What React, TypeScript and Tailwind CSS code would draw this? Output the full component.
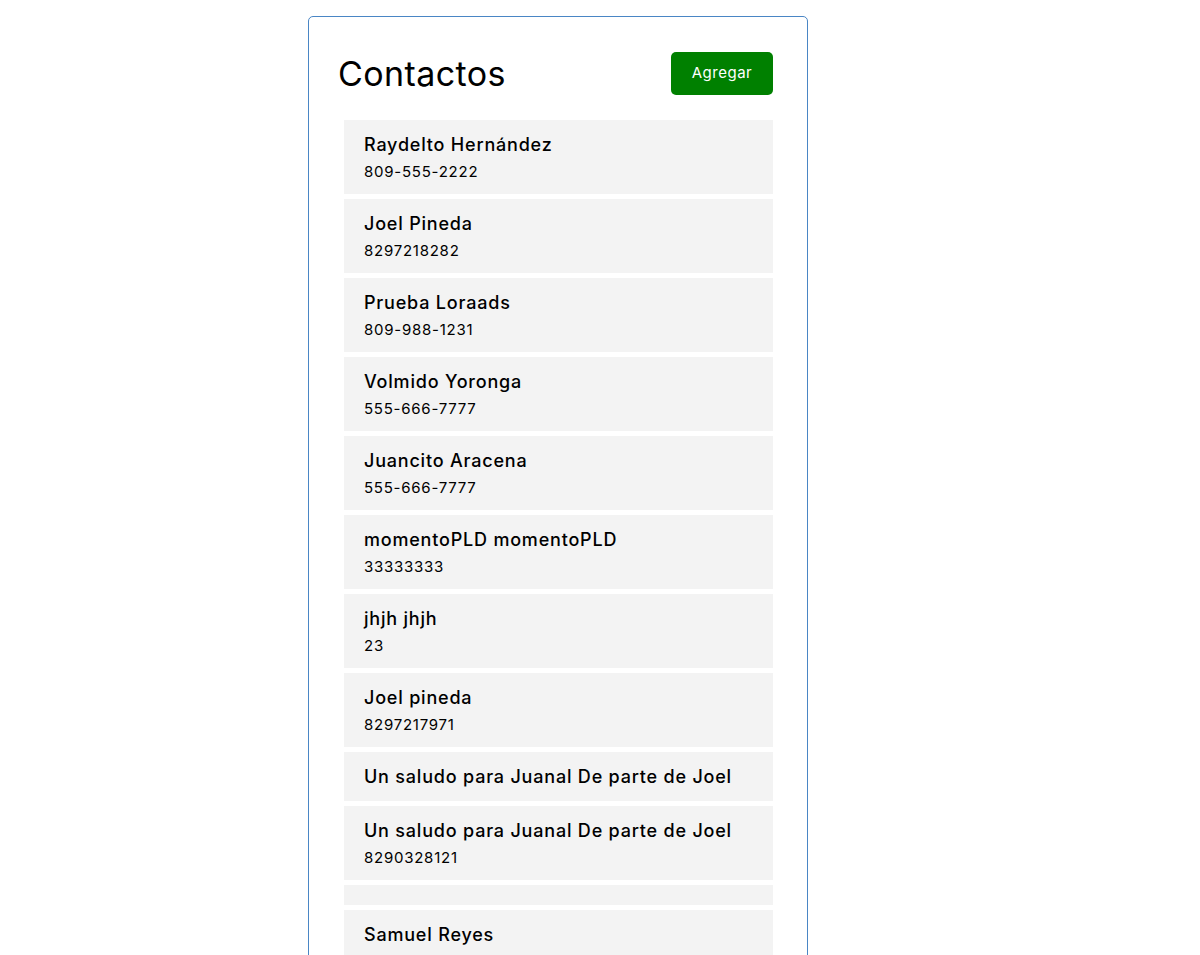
const contacts: { name: string; phone?: string }[] = [
  { name: "Raydelto Hernández", phone: "809-555-2222" },
  { name: "Joel Pineda", phone: "8297218282" },
  { name: "Prueba Loraads", phone: "809-988-1231" },
  { name: "Volmido Yoronga", phone: "555-666-7777" },
  { name: "Juancito Aracena", phone: "555-666-7777" },
  { name: "momentoPLD momentoPLD", phone: "33333333" },
  { name: "jhjh jhjh", phone: "23" },
  { name: "Joel pineda", phone: "8297217971" },
  { name: "Un saludo para Juanal De parte de Joel" },
  { name: "Un saludo para Juanal De parte de Joel", phone: "8290328121" },
  { name: "" },
  { name: "Samuel Reyes" },
];

const App = () => {
  return (
    <div className="min-h-[955px] bg-white pt-4 font-['Inter',sans-serif] text-black">
      {/* card */}
      <div className="ml-[308px] w-[500px] rounded-[5px] border border-[#4a86c5] pl-[29px] pr-[34px] pb-8">
        <div className="flex items-center justify-between pt-[35px]">
          <h1 className="text-[34px] font-normal leading-[43px] tracking-[0.4px]">Contactos</h1>
          <button className="h-[43px] w-[102px] rounded-[5px] bg-[#008000] text-[15px] tracking-[0.5px] text-white">
            Agregar
          </button>
        </div>

        <ul className="mt-[25px] ml-[6px] flex flex-col gap-[5px]">
          {contacts.map((c, i) => (
            <li
              key={i}
              className={
                c.phone
                  ? "h-[74px] bg-[#f3f3f3] px-5 pt-[11px]"
                  : c.name
                    ? "h-[49px] bg-[#f3f3f3] px-5 pt-[11px]"
                    : "h-[20px] bg-[#f3f3f3]"
              }
            >
              {c.name && (
                <h3 className="h-[28px] text-[18px] font-medium leading-[28px] tracking-[0.8px]">{c.name}</h3>
              )}
              {c.phone && (
                <p className="h-[26px] text-[15px] leading-[26px] tracking-[0.75px]">{c.phone}</p>
              )}
            </li>
          ))}
        </ul>
      </div>
    </div>
  );
};

export default App;
